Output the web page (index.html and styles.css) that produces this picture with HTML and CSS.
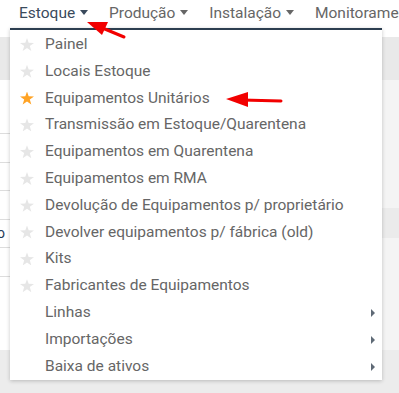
FILE: index.html
```html
<!DOCTYPE html>
<html lang="pt-BR">
<head>
    <meta charset="UTF-8">
    <meta name="viewport" content="width=device-width, initial-scale=1.0">
    <title>Estoque</title>
    <link rel="stylesheet" href="styles.css">
</head>
<body>
    <nav class="topbar">
        <a class="nav-item active">Estoque <span class="caret"></span></a>
        <a class="nav-item">Produção <span class="caret"></span></a>
        <a class="nav-item">Instalação <span class="caret"></span></a>
        <a class="nav-item">Monitoramento <span class="caret"></span></a>
    </nav>

    <div class="page">
        <div class="control-band"></div>
        <div class="page-body">
            <div class="sheet">
                <div class="sheet-row"></div>
                <div class="sheet-row"></div>
                <div class="sheet-row"></div>
                <div class="sheet-row"><span class="cell-text">o</span></div>
                <div class="sheet-row"></div>
            </div>
            <div class="side">
                <div class="side-stripe first"></div>
                <div class="side-stripe"></div>
            </div>
        </div>
        <div class="footer-band"></div>
    </div>

    <!-- dropdown opened from "Estoque" -->
    <ul class="dropdown">
        <li><span class="star"></span>Painel</li>
        <li><span class="star"></span>Locais Estoque</li>
        <li><span class="star fav"></span>Equipamentos Unitários</li>
        <li><span class="star"></span>Transmissão em Estoque/Quarentena</li>
        <li><span class="star"></span>Equipamentos em Quarentena</li>
        <li><span class="star"></span>Equipamentos em RMA</li>
        <li><span class="star"></span>Devolução de Equipamentos p/ proprietário</li>
        <li><span class="star"></span>Devolver equipamentos p/ fábrica (old)</li>
        <li><span class="star"></span>Kits</li>
        <li><span class="star"></span>Fabricantes de Equipamentos</li>
        <li class="submenu">Linhas</li>
        <li class="submenu">Importações</li>
        <li class="submenu">Baixa de ativos</li>
    </ul>

    <!-- red annotation arrows -->
    <svg class="annotations" width="399" height="393" viewBox="0 0 399 393">
        <line x1="124" y1="37" x2="100" y2="27" stroke="#f20000" stroke-width="3" stroke-linecap="round"/>
        <polygon points="87,22 108,22 102,35" fill="#f20000"/>
        <line x1="281" y1="101" x2="242" y2="100" stroke="#f20000" stroke-width="3" stroke-linecap="round"/>
        <polygon points="226,99 248,92 248,107" fill="#f20000"/>
    </svg>
</body>
</html>
```

FILE: styles.css
```css
body {
    margin: 0;
    font-family: Roboto, "Noto Sans", sans-serif;
    background-color: #ffffff;
    width: 399px;
    height: 393px;
    overflow: hidden;
    position: relative;
}
.topbar {
    display: flex;
    height: 28px;
    padding-left: 19px;
    gap: 21px;
    white-space: nowrap;
    overflow: hidden;
}
.nav-item {
    font-size: 15.5px;
    line-height: 26px;
    color: #666666;
}
.nav-item.active {
    color: #3a4a5c;
}
.caret {
    display: inline-block;
    width: 0;
    height: 0;
    border-left: 4.5px solid transparent;
    border-right: 4.5px solid transparent;
    border-top: 5px solid currentColor;
    vertical-align: 3px;
    margin-left: 1px;
}
.page {
    padding-top: 9px;
}
.control-band {
    height: 43px;
    background-color: #e9e9e9;
}
.page-body {
    display: flex;
    height: 270px;
}
.sheet {
    flex: 1;
    background-color: #ffffff;
    padding-top: 53px;
}
.sheet-row {
    height: 27.6px;
    border-top: 1px solid #dddddd;
}
.sheet-row:last-child {
    border-bottom: 1px solid #dddddd;
}
.cell-text {
    font-size: 14px;
    color: #1f3a5a;
    line-height: 27px;
    margin-left: -3px;
}
.side {
    width: 17px;
    background-color: #f4f4f4;
    padding-top: 128px;
}
.side-stripe {
    height: 15px;
    background-color: #ebebeb;
}
.footer-band {
    height: 60px;
    background-color: #ececec;
}
.dropdown {
    position: absolute;
    left: 10px;
    top: 28px;
    width: 372px;
    margin: 0;
    padding: 1px 0 0;
    list-style: none;
    background-color: #ffffff;
    border-top: 2px solid #2c3e50;
    box-shadow: 0 1px 4px rgba(0, 0, 0, 0.22);
    height: 352px;
    box-sizing: border-box;
}
.dropdown li {
    height: 26.8px;
    line-height: 26.8px;
    font-size: 15.5px;
    color: #666666;
    padding-left: 35px;
    position: relative;
    white-space: nowrap;
}
.star {
    position: absolute;
    left: 10px;
    top: 7px;
    width: 14px;
    height: 13px;
    background-color: #e6e6e6;
    clip-path: polygon(50% 0%, 62% 36%, 100% 38%, 70% 61%, 81% 100%, 50% 77%, 19% 100%, 30% 61%, 0% 38%, 38% 36%);
}
.star.fav {
    background-color: #ffa325;
}
.submenu::after {
    content: "";
    position: absolute;
    right: 7px;
    top: 10px;
    border-top: 4px solid transparent;
    border-bottom: 4px solid transparent;
    border-left: 4px solid #5f6a76;
}
.annotations {
    position: absolute;
    left: 0;
    top: 0;
    pointer-events: none;
}
```
